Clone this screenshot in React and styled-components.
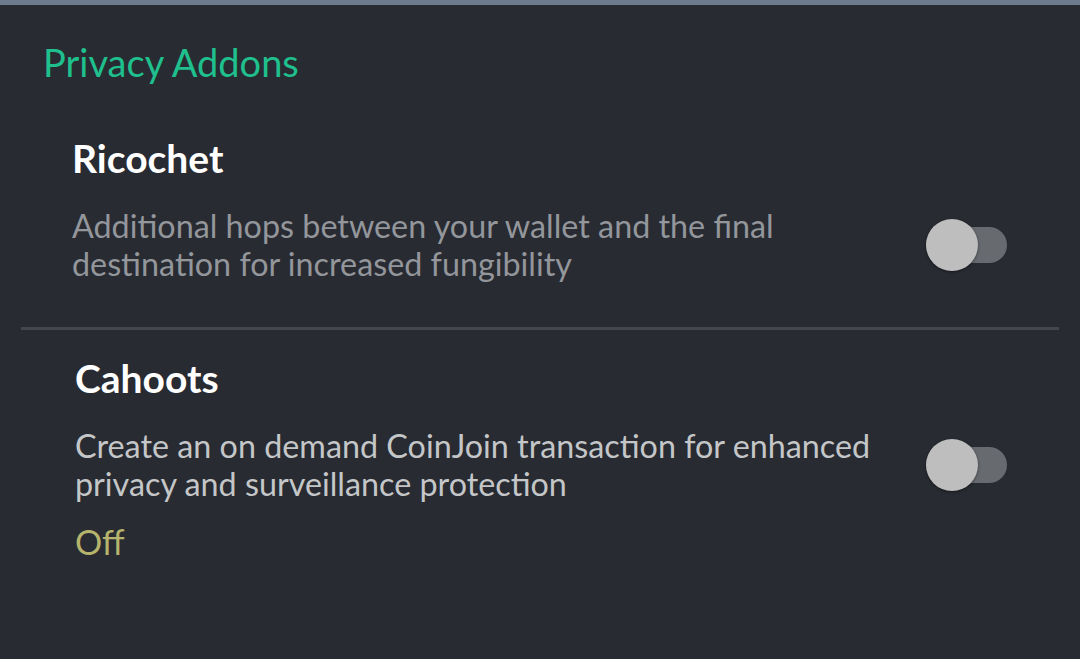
import React from 'react'
import styled, { createGlobalStyle } from 'styled-components'

const Global = createGlobalStyle`
    html, body {
        margin: 0;
        padding: 0;
        background: #282b32;
    }
    body {
        font-family: 'Lato', 'Noto Sans', sans-serif;
    }
`

const Screen = styled.div`
    width: 1080px;
    height: 659px;
    background: #282b32;
    border-top: 5px solid #6e7a8e;
    box-sizing: border-box;
    overflow: hidden;
`

const Header = styled.div`
    font-size: 38px;
    line-height: 44px;
    color: #1fc08e;
    padding: 35px 0 0 43px;
`

const Item = styled.div`
    padding: ${p => p.$top}px 73px ${p => p.$bottom}px ${p => p.$left}px;
`

const Title = styled.div`
    font-size: 39px;
    line-height: 44px;
    font-weight: 700;
    color: #ffffff;
`

const Row = styled.div`
    display: flex;
    flex-direction: row;
    align-items: center;
    gap: 16px;
    margin-top: 27px;
`

const Description = styled.div`
    flex: 1;
    font-size: 32.3px;
    line-height: 38px;
    color: ${p => p.$dim ? '#93969b' : '#c4c6c8'};
`

const Status = styled.div`
    font-size: 34px;
    line-height: 40px;
    color: #b6b46c;
    margin-top: 19px;
`

const Divider = styled.div`
    height: 3px;
    margin: 0 21px;
    background: #44484e;
`

const Switch = styled.div`
    position: relative;
    width: 81px;
    height: 52px;
    flex-shrink: 0;
`

const Track = styled.div`
    position: absolute;
    left: 0;
    right: 0;
    top: 8px;
    height: 36px;
    border-radius: 18px;
    background: #676a6f;
`

const Thumb = styled.div`
    position: absolute;
    left: 0;
    top: 0;
    width: 52px;
    height: 52px;
    border-radius: 50%;
    background: #bebebe;
    box-shadow: 0 1px 3px rgba(0, 0, 0, 0.45);
`

const Toggle = () => (
    <Switch>
        <Track />
        <Thumb />
    </Switch>
)

export default function App() {
    return (
        <Screen>
            <Global />
            <Header>Privacy Addons</Header>
            <Item $top={52} $bottom={44} $left={72}>
                <Title>Ricochet</Title>
                <Row>
                    <Description $dim>
                        Additional hops between your wallet and the final destination for increased fungibility
                    </Description>
                    <Toggle />
                </Row>
            </Item>
            <Divider />
            <Item $top={26} $bottom={0} $left={75}>
                <Title>Cahoots</Title>
                <Row>
                    <Description>
                        Create an on demand CoinJoin transaction for enhanced privacy and surveillance protection
                    </Description>
                    <Toggle />
                </Row>
                <Status>Off</Status>
            </Item>
        </Screen>
    )
}
